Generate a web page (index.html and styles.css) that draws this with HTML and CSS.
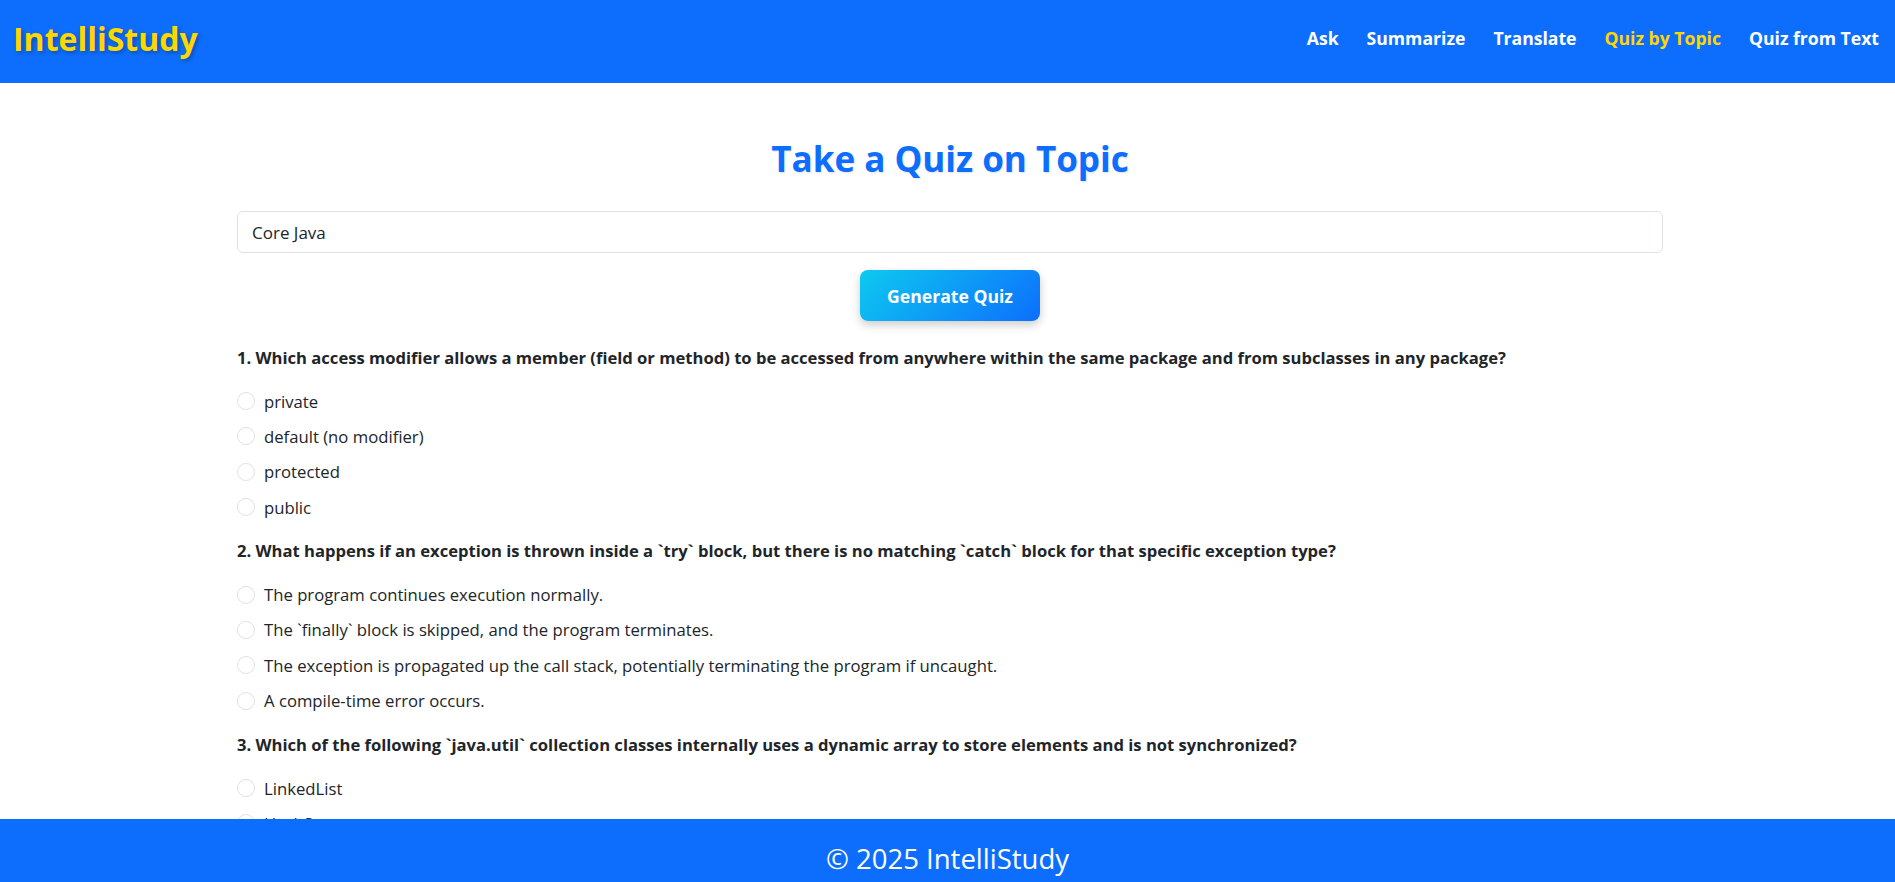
FILE: index.html
```html
<!DOCTYPE html>
<html lang="en">
<head>
<meta charset="utf-8">
<title>IntelliStudy - Quiz by Topic</title>
<link rel="stylesheet" href="styles.css">
</head>
<body>
<header class="navbar">
  <a class="brand" href="#">IntelliStudy</a>
  <nav class="nav">
    <a class="nav-link" href="#">Ask</a>
    <a class="nav-link" href="#">Summarize</a>
    <a class="nav-link" href="#">Translate</a>
    <a class="nav-link active" href="#">Quiz by Topic</a>
    <a class="nav-link" href="#">Quiz from Text</a>
  </nav>
</header>

<main class="container">
  <h1 class="page-title">Take a Quiz on Topic</h1>
  <input class="topic-input" type="text" value="Core Java">
  <div class="actions">
    <button class="btn-generate" type="button">Generate Quiz</button>
  </div>

  <section class="question">
    <p class="q-text">1. Which access modifier allows a member (field or method) to be accessed from anywhere within the same package and from subclasses in any package?</p>
    <label class="option"><input type="radio" name="q1"><span>private</span></label>
    <label class="option"><input type="radio" name="q1"><span>default (no modifier)</span></label>
    <label class="option"><input type="radio" name="q1"><span>protected</span></label>
    <label class="option"><input type="radio" name="q1"><span>public</span></label>
  </section>

  <section class="question">
    <p class="q-text">2. What happens if an exception is thrown inside a `try` block, but there is no matching `catch` block for that specific exception type?</p>
    <label class="option"><input type="radio" name="q2"><span>The program continues execution normally.</span></label>
    <label class="option"><input type="radio" name="q2"><span>The `finally` block is skipped, and the program terminates.</span></label>
    <label class="option"><input type="radio" name="q2"><span>The exception is propagated up the call stack, potentially terminating the program if uncaught.</span></label>
    <label class="option"><input type="radio" name="q2"><span>A compile-time error occurs.</span></label>
  </section>

  <section class="question">
    <p class="q-text">3. Which of the following `java.util` collection classes internally uses a dynamic array to store elements and is not synchronized?</p>
    <label class="option"><input type="radio" name="q3"><span>LinkedList</span></label>
    <label class="option"><input type="radio" name="q3"><span>HashSet</span></label>
    <label class="option"><input type="radio" name="q3"><span>ArrayList</span></label>
    <label class="option"><input type="radio" name="q3"><span>Vector</span></label>
  </section>
</main>

<footer class="footer">© 2025 IntelliStudy</footer>
</body>
</html>
```

FILE: styles.css
```css
* { box-sizing: border-box; }

html, body {
  margin: 0;
  padding: 0;
  overflow: hidden;
}

body {
  font-family: "Open Sans", "Noto Sans", sans-serif;
  color: #212529;
  background: #ffffff;
  font-size: 16.6px;
  line-height: 1.5;
}

.navbar {
  height: 83px;
  background: #0d6efd;
  display: flex;
  align-items: center;
  justify-content: space-between;
  padding: 0 16px 0 13px;
}

.brand {
  color: #ffd700;
  font-weight: 700;
  font-size: 32px;
  text-decoration: none;
  text-shadow: 2px 2px 4px rgba(0, 0, 0, 0.3);
  margin-top: -5px;
}

.nav {
  display: flex;
  gap: 28px;
  margin-top: -6px;
}

.nav-link {
  color: #ffffff;
  font-weight: 700;
  font-size: 17.6px;
  text-decoration: none;
}

.nav-link.active { color: #ffd700; }

.container {
  width: 1426px;
  margin: 0 0 0 calc(50% - 710.5px);
  padding-bottom: 120px;
}

.page-title {
  margin: 55px 0 31px;
  text-align: center;
  color: #0d6efd;
  font-size: 35px;
  font-weight: 700;
  line-height: 42px;
  text-shadow: 1px 1px 2px rgba(0, 0, 0, 0.12);
}

.topic-input {
  display: block;
  width: 100%;
  height: 42px;
  padding: 6px 14px;
  font-family: inherit;
  font-size: 17px;
  color: #212529;
  border: 1px solid #dee2e6;
  border-radius: 6px;
  background: #fff;
  outline: none;
}

.actions {
  display: flex;
  justify-content: center;
  margin: 17px 0 24px;
}

.btn-generate {
  width: 180px;
  height: 51px;
  border: 0;
  border-radius: 8px;
  background: linear-gradient(135deg, #0dcaf0 0%, #0d6efd 100%);
  color: #fff;
  font-family: inherit;
  font-size: 17.6px;
  font-weight: 700;
  box-shadow: 0 4px 10px rgba(0, 0, 0, 0.2);
  cursor: pointer;
}

.question {
  margin-bottom: 18px;
}

.q-text {
  margin: 0 0 16.5px;
  font-weight: 700;
  font-size: 16.6px;
  line-height: 26.4px;
}

.option {
  display: flex;
  align-items: center;
  height: 26.4px;
  margin-bottom: 9px;
  font-size: 16.7px;
}

.option input {
  appearance: none;
  -webkit-appearance: none;
  width: 18px;
  height: 18px;
  margin: 0 9px 0 0;
  border: 1px solid #dee2e6;
  border-radius: 50%;
  background: #fff;
  flex: none;
}

.footer {
  position: fixed;
  left: 0;
  right: 0;
  bottom: 0;
  height: 63px;
  background: #0d6efd;
  color: #fff;
  font-size: 27.5px;
  display: flex;
  align-items: center;
  justify-content: center;
  padding-top: 17px;
}
```
